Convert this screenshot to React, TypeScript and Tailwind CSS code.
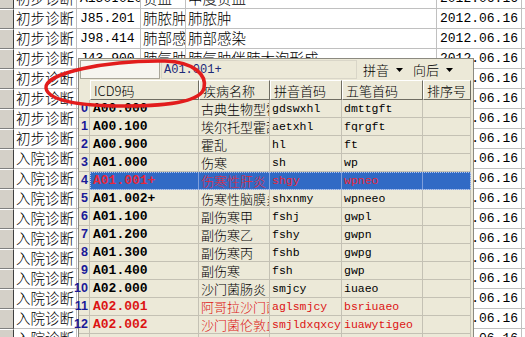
import React from "react";

const mono = "[font-family:'Liberation_Mono',monospace]";
const cjk = "[font-family:'Noto_Sans_CJK_SC',sans-serif]";

interface BgRow {
  kind: string;
  code?: string;
  n1?: string;
  n2?: string;
}

const bgRows: BgRow[] = [
  { kind: "初步诊断", code: "A150I020", n1: "贫血", n2: "中度贫血" },
  { kind: "初步诊断", code: "J85.201", n1: "肺脓肿", n2: "肺脓肿" },
  { kind: "初步诊断", code: "J98.414", n1: "肺部感染", n2: "肺部感染" },
  { kind: "初步诊断", code: "J43.900", n1: "肺气肿", n2: "肺气肿伴肺大泡形成" },
  { kind: "初步诊断" },
  { kind: "初步诊断" },
  { kind: "初步诊断" },
  { kind: "初步诊断" },
  { kind: "入院诊断" },
  { kind: "入院诊断" },
  { kind: "入院诊断" },
  { kind: "入院诊断" },
  { kind: "入院诊断" },
  { kind: "入院诊断" },
  { kind: "入院诊断" },
  { kind: "入院诊断" },
  { kind: "入院诊断" },
  { kind: "入院诊断" },
];

interface Icd {
  code: string;
  name: string;
  py: string;
  wb: string;
  red?: boolean;
}

const icdRows: Icd[] = [
  { code: "A00.000", name: "古典生物型霍乱", py: "gdswxhl", wb: "dmttgft" },
  { code: "A00.100", name: "埃尔托型霍乱", py: "aetxhl", wb: "fqrgft" },
  { code: "A00.900", name: "霍乱", py: "hl", wb: "ft" },
  { code: "A01.000", name: "伤寒", py: "sh", wb: "wp" },
  { code: "A01.001+", name: "伤寒性肝炎", py: "shgy", wb: "wpneo" },
  { code: "A01.002+", name: "伤寒性脑膜炎", py: "shxnmy", wb: "wpneeo" },
  { code: "A01.100", name: "副伤寒甲", py: "fshj", wb: "gwpl" },
  { code: "A01.200", name: "副伤寒乙", py: "fshy", wb: "gwpn" },
  { code: "A01.300", name: "副伤寒丙", py: "fshb", wb: "gwpg" },
  { code: "A01.400", name: "副伤寒", py: "fsh", wb: "gwp" },
  { code: "A02.000", name: "沙门菌肠炎", py: "smjcy", wb: "iuaeo" },
  { code: "A02.001", name: "阿哥拉沙门菌", py: "aglsmjcy", wb: "bsriuaeo", red: true },
  { code: "A02.002", name: "沙门菌伦敦血清型", py: "smjldxqxcy", wb: "iuawytigeo", red: true },
];

const selected = 4;

function Caret() {
  return (
    <svg width="7" height="4" viewBox="0 0 7 4" className="shrink-0">
      <path d="M0 0h7L3.5 4z" fill="#000" />
    </svg>
  );
}

export default function App() {
  return (
    <div className="relative w-[525px] h-[337px] overflow-hidden bg-white text-black">
      {/* background diagnosis grid */}
      <div className="flex flex-col mt-[-11px]">
        {bgRows.map((r, i) => (
          <div key={i} className="flex h-[20px] shrink-0">
            <div className="w-[14px] shrink-0 bg-[#d4d0c8] border-t border-t-white border-b border-b-[#808080] border-r border-r-[#404040]" />
            <div className={`w-[63px] shrink-0 flex items-center pl-[2px] border-r border-b border-[#c0c0c0] text-[14.5px] font-light leading-none ${cjk} overflow-hidden whitespace-nowrap`}>
              {r.kind}
            </div>
            <div className={`w-[64px] shrink-0 flex items-center pl-[3px] border-r border-b border-[#c0c0c0] text-[13px] leading-none ${mono} overflow-hidden whitespace-nowrap`}>
              {r.code}
            </div>
            <div className={`w-[45px] shrink-0 flex items-center pl-[2px] border-r border-b border-[#c0c0c0] text-[14.5px] font-light leading-none ${cjk} overflow-hidden whitespace-nowrap`}>
              {r.n1}
            </div>
            <div className={`w-[251px] shrink-0 flex items-center pl-[2px] border-r border-b border-[#c0c0c0] text-[14.5px] font-light leading-none ${cjk} overflow-hidden whitespace-nowrap`}>
              {r.n2}
            </div>
            <div className={`w-[85px] shrink-0 flex items-center pl-[3px] border-r border-b border-[#c0c0c0] text-[13px] leading-none ${mono} overflow-hidden whitespace-nowrap`}>
              2012.06.16
            </div>
            <div className="flex-1 border-b border-[#c0c0c0]" />
          </div>
        ))}
      </div>

      {/* ICD lookup popup */}
      <div className="absolute left-[78px] top-[58px] w-[396px] bottom-0 bg-[#ece9d8] border-l border-r border-t border-[#8c8a80] flex flex-col">
        <div className="flex h-[21px] shrink-0 items-center pl-[1px] gap-[1px]">
          <div className="w-[80px] h-[19px] shrink-0 bg-[#f6f5ef] border border-[#a9a698]" />
          <div className={`w-[196px] h-[19px] shrink-0 flex items-center pl-[2px] border border-[#d9d6c8] text-[12px] leading-none text-[#1d2a78] ${mono}`}>
            A01.001+
          </div>
          <div className={`flex items-center pl-[5px] text-[13px] font-light leading-none ${cjk}`}>
            <span>拼音</span>
            <span className="ml-[7px]"><Caret /></span>
            <span className="ml-[10px]">向后</span>
            <span className="ml-[7px]"><Caret /></span>
          </div>
        </div>

        {/* header */}
        <div className={`flex h-[20px] shrink-0 text-[13px] font-light leading-none ${cjk}`}>
          <div className="w-[11px] shrink-0" />
          {[
            ["ICD9码", "w-[109px]"],
            ["疾病名称", "w-[71px]"],
            ["拼音首码", "w-[72px]"],
            ["五笔首码", "w-[81px]"],
            ["排序号", "w-[48px]"],
          ].map(([t, w]) => (
            <div
              key={t}
              className={`${w} shrink-0 flex items-center pl-[3px] border-t border-l border-t-white border-l-white border-r border-b border-r-[#6f6d62] border-b-[#6f6d62] whitespace-nowrap overflow-hidden`}
            >
              {t}
            </div>
          ))}
        </div>

        {/* rows */}
        {icdRows.map((r, i) => {
          const sel = i === selected;
          const color = sel ? "text-[#e8283a]" : r.red ? "text-[#dc1414]" : "text-black";
          const line = sel ? "border-[#7f9fdc]" : "border-[#c4c1b4]";
          return (
            <div key={r.code} className="flex h-[18px] shrink-0">
              <div className="w-[11px] shrink-0 relative border-b border-r border-[#c4c1b4]">
                <span className="absolute right-[1px] top-[2px] text-[12.5px] leading-none font-bold text-[#1a1a98] [font-family:'Liberation_Sans',sans-serif]">
                  {i}
                </span>
              </div>
              <div
                className={`flex ${color} ${sel ? "bg-[#316ac5] outline outline-1 outline-dotted outline-[#b7c8ea] -outline-offset-1" : ""}`}
              >
                <div className={`w-[109px] shrink-0 flex items-center pl-[3px] border-r border-b ${line} text-[13px] font-bold leading-none ${mono} overflow-hidden whitespace-nowrap`}>
                  {r.code}
                </div>
                <div className={`w-[71px] shrink-0 flex items-center pl-[2px] border-r border-b ${line} text-[13px] font-light leading-none ${cjk} overflow-hidden whitespace-nowrap`}>
                  {r.name}
                </div>
                <div className={`w-[72px] shrink-0 flex items-center pl-[2px] border-r border-b ${line} text-[11.5px] leading-none ${mono} overflow-hidden whitespace-nowrap`}>
                  {r.py}
                </div>
                <div className={`w-[81px] shrink-0 flex items-center pl-[2px] border-r border-b ${line} text-[11.5px] leading-none ${mono} overflow-hidden whitespace-nowrap`}>
                  {r.wb}
                </div>
                <div className={`w-[48px] shrink-0 border-r border-b ${line}`} />
              </div>
            </div>
          );
        })}
        <div className="flex h-[18px] shrink-0">
          <div className="w-[11px] shrink-0 border-r border-[#c4c1b4]" />
          <div className="w-[109px] shrink-0 border-r border-[#c4c1b4]" />
          <div className="w-[71px] shrink-0 border-r border-[#c4c1b4]" />
          <div className="w-[72px] shrink-0 border-r border-[#c4c1b4]" />
          <div className="w-[81px] shrink-0 border-r border-[#c4c1b4]" />
          <div className="w-[48px] shrink-0 border-r border-[#c4c1b4]" />
        </div>
      </div>

      {/* red annotation ring */}
      <svg className="absolute left-0 top-0 pointer-events-none" width="525" height="337" viewBox="0 0 525 337">
        <path
          d="M46 88 C44 73 108 60 165 61 C194 62 207 75 204 88 C201 101 172 106 125 106 C80 106 48 101 46 88 Z"
          fill="none"
          stroke="#e21c1c"
          strokeWidth="3.5"
        />
      </svg>
    </div>
  );
}
